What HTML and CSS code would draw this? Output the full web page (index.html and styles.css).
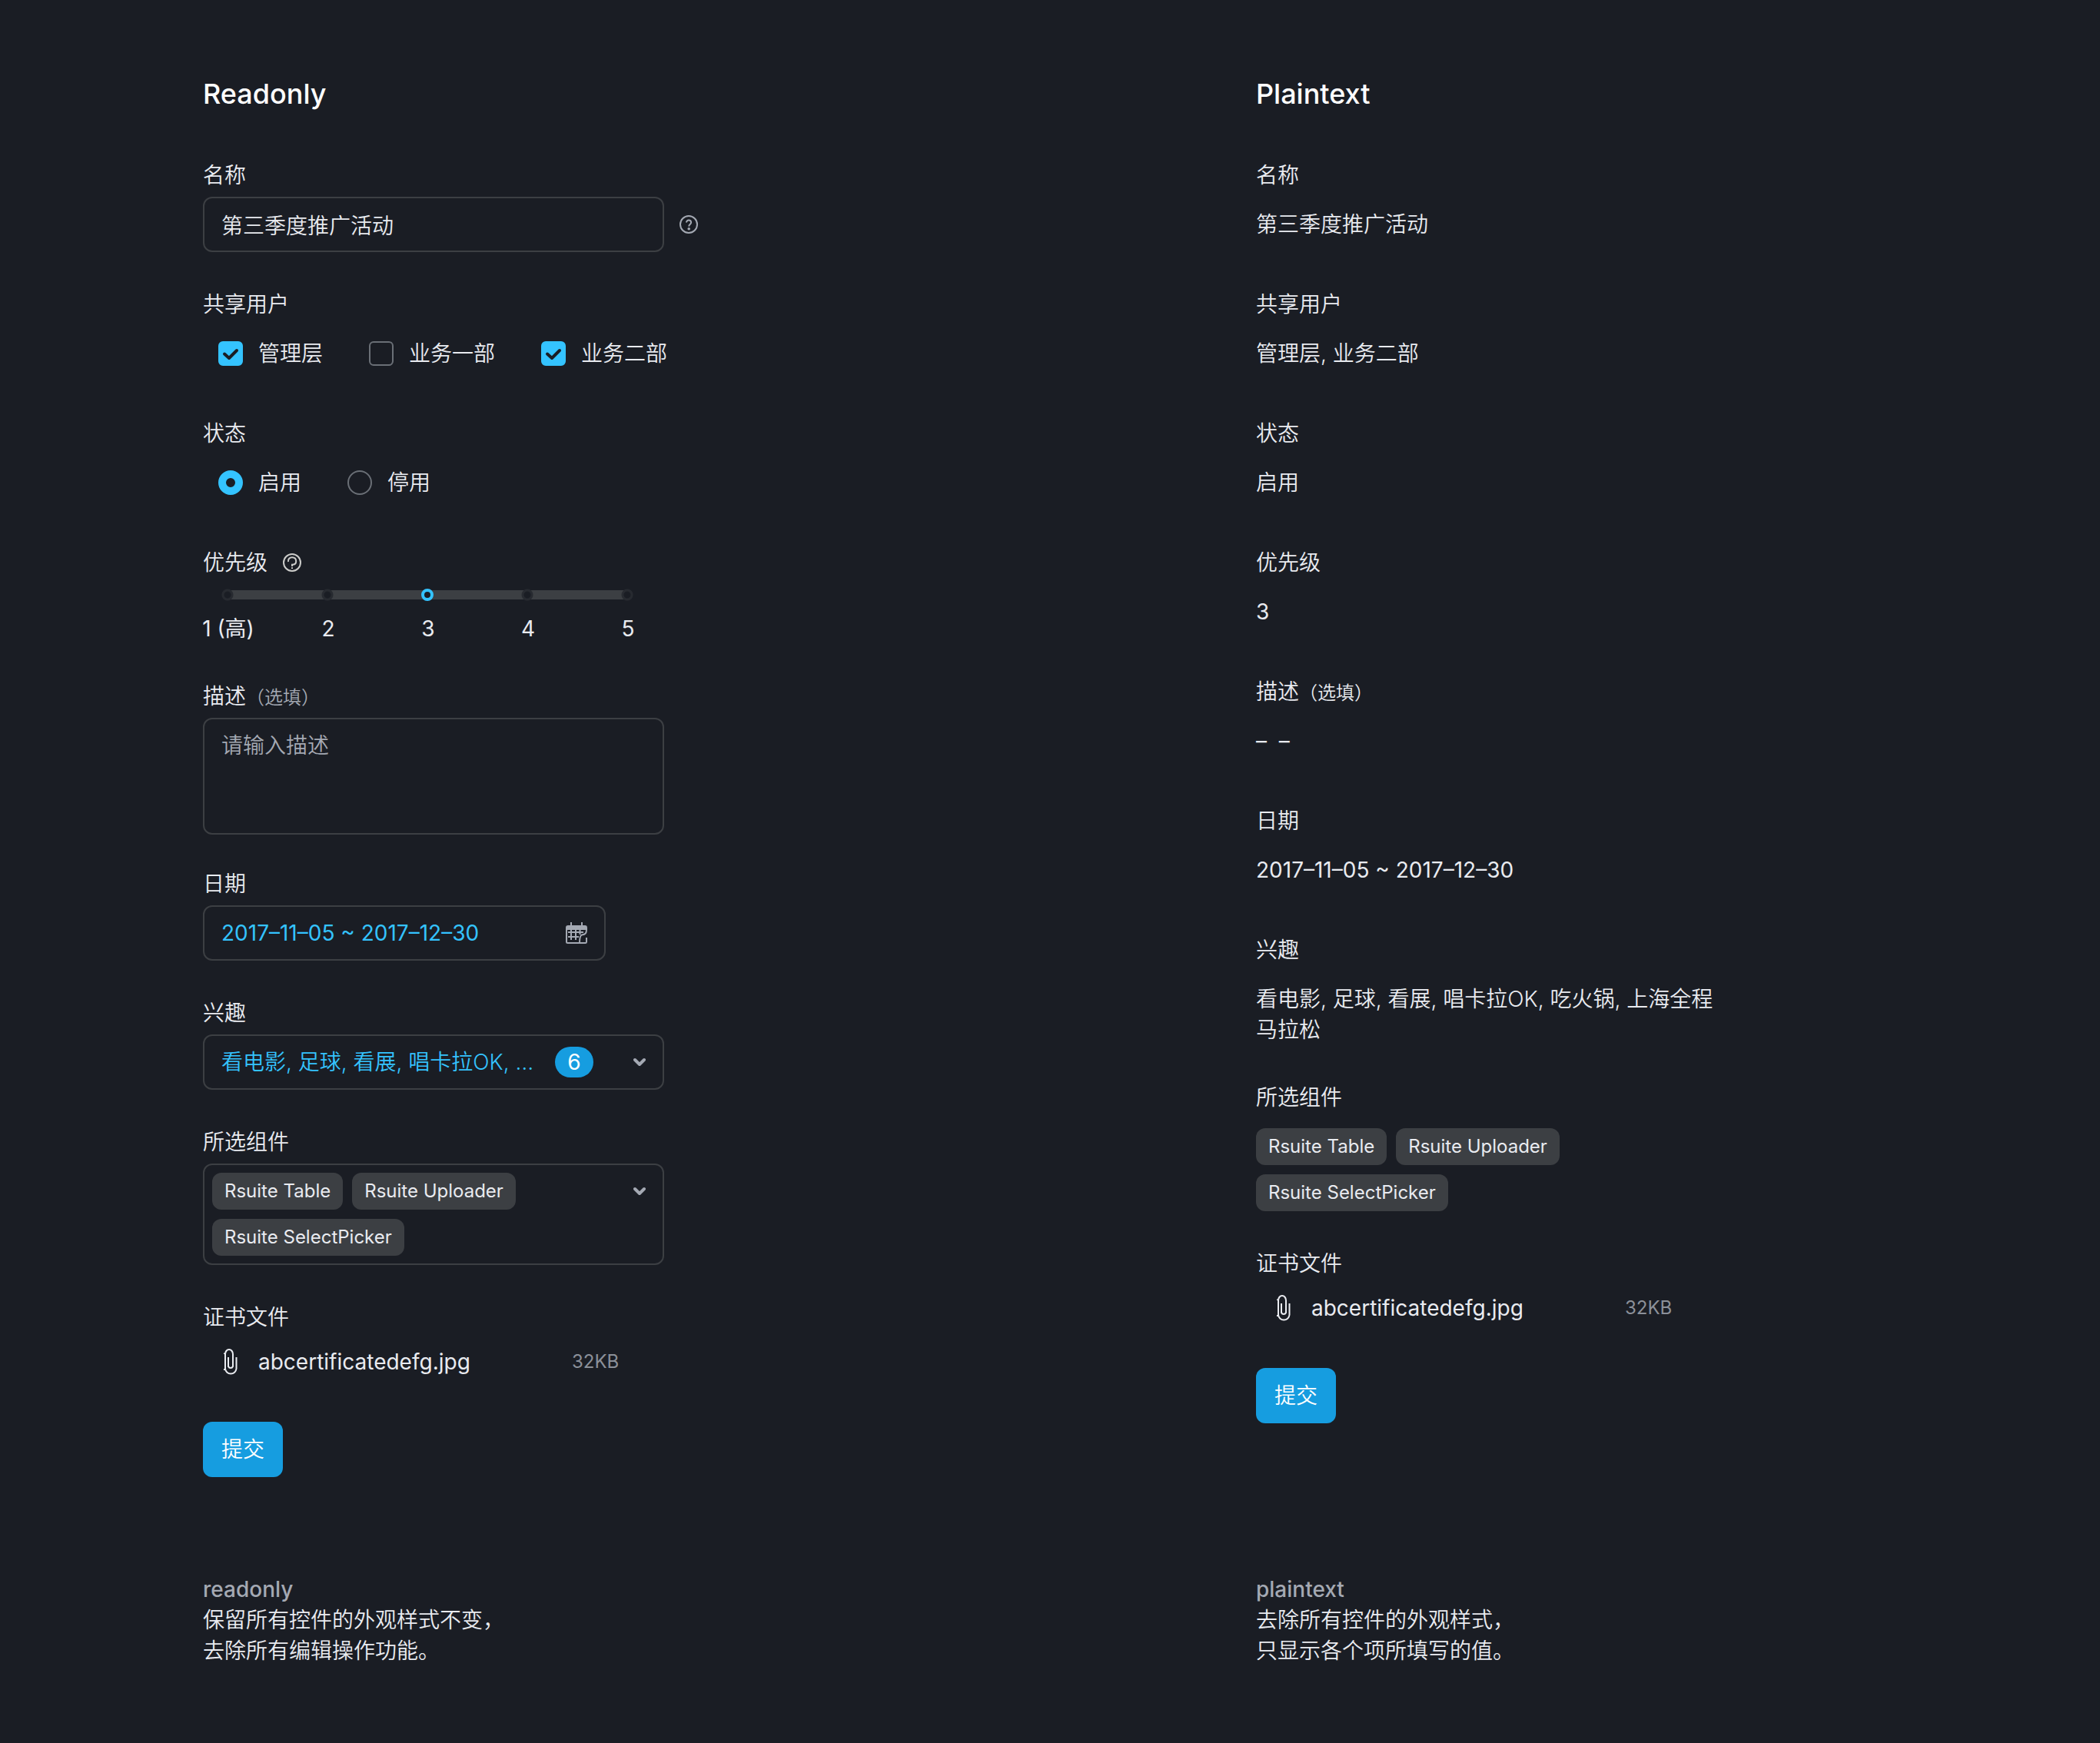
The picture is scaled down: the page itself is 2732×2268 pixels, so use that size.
FILE: index.html
```html
<!DOCTYPE html>
<html lang="zh-CN">
<head>
<meta charset="utf-8">
<meta name="viewport" content="width=device-width, initial-scale=1">
<title>Readonly / Plaintext</title>
<link rel="stylesheet" href="styles.css">
</head>
<body>
<main class="board">
  <form class="panel">
    <h2 class="panel-title">Readonly</h2>

    <div class="field">
      <label class="label" for="name">名称</label>
      <div class="control-row">
        <input class="control" id="name" type="text" value="第三季度推广活动" readonly>
        <svg class="icon-help" viewBox="0 0 24 24" fill="none" stroke="currentColor" stroke-width="2" aria-hidden="true">
          <circle cx="12" cy="12" r="11"/>
          <path d="M9 9.6C9 7.800 10.200 6.600 12 6.600S15.100 7.800 15.100 9.500C15.100 11.700 12.300 11.700 12.200 14.600"/>
          <circle cx="12.200" cy="17.800" r="1.800" fill="currentColor" stroke="none"/>
        </svg>
      </div>
    </div>

    <fieldset class="field">
      <legend class="label">共享用户</legend>
      <div class="choices">
        <label class="choice"><span class="mark"><input class="box" type="checkbox" checked><svg class="tick" viewBox="0 0 32 32" aria-hidden="true"><path d="M8 16.500L14 22L24 12"/></svg></span>管理层</label>
        <label class="choice"><span class="mark"><input class="box" type="checkbox"></span>业务一部</label>
        <label class="choice"><span class="mark"><input class="box" type="checkbox" checked><svg class="tick" viewBox="0 0 32 32" aria-hidden="true"><path d="M8 16.500L14 22L24 12"/></svg></span>业务二部</label>
      </div>
    </fieldset>

    <fieldset class="field">
      <legend class="label">状态</legend>
      <div class="choices">
        <label class="choice"><input class="dot" type="radio" name="status" checked>启用</label>
        <label class="choice"><input class="dot" type="radio" name="status">停用</label>
      </div>
    </fieldset>

    <div class="field">
      <div class="label-row">
        <label class="label" for="priority">优先级</label>
        <svg class="icon-help icon-help-light" viewBox="0 0 24 24" fill="none" stroke="currentColor" stroke-width="2" aria-hidden="true">
          <circle cx="12" cy="12" r="11"/>
          <path d="M7 11C6.500 7.500 8.800 5.200 12 5.200S17.200 7.300 17.200 10.200S15 14.700 12 14.700V17"/>
          <path d="M12 18.300V20"/>
        </svg>
      </div>
      <div class="scale">
        <input class="slider" id="priority" type="range" min="1" max="5" value="3">
        <ul class="ticks">
          <li>1 (高)</li><li>2</li><li>3</li><li>4</li><li>5</li>
        </ul>
      </div>
    </div>

    <div class="field field-area">
      <label class="label" for="desc">描述<span class="optional">（选填）</span></label>
      <textarea class="control control-area" id="desc" placeholder="请输入描述" readonly></textarea>
    </div>

    <div class="field">
      <label class="label" for="date">日期</label>
      <div class="date">
        <input class="date-input" id="date" type="text" value="2017–11–05 ~ 2017–12–30" readonly>
        <svg class="icon-calendar" viewBox="0 0 28 28" fill="none" stroke="currentColor" stroke-width="2" aria-hidden="true">
          <path d="M7 0V5M21 0V5"/>
          <path d="M3 5H25A2 2 0 0 1 27 7V9H1V7A2 2 0 0 1 3 5Z" fill="currentColor"/>
          <path d="M1 9V25.500A1.500 1.500 0 0 0 2.500 27H25.500A1.500 1.500 0 0 0 27 25.500V20"/>
          <path d="M27 9C27 14 26 16 21 16.500C19 17 18 20 18 27M3 13H23M3 19H17M7 10V23M13 10V23M18.500 10V16"/>
        </svg>
      </div>
    </div>

    <div class="field">
      <span class="label" id="interest-label">兴趣</span>
      <button class="control picker" type="button" aria-haspopup="listbox" aria-labelledby="interest-label">
        <span class="picker-value">看电影, 足球, 看展, 唱卡拉OK, …</span>
        <span class="badge">6</span>
        <svg class="caret" viewBox="0 0 16 12" aria-hidden="true"><path d="M2 3L8 9L14 3"/></svg>
      </button>
    </div>

    <div class="field">
      <span class="label" id="parts-label">所选组件</span>
      <button class="control picker-tags" type="button" aria-haspopup="listbox" aria-labelledby="parts-label">
        <span class="tags"><span class="tag">Rsuite Table</span><span class="tag">Rsuite Uploader</span><span class="tag">Rsuite SelectPicker</span></span>
        <svg class="caret" viewBox="0 0 16 12" aria-hidden="true"><path d="M2 3L8 9L14 3"/></svg>
      </button>
    </div>

    <div class="field">
      <span class="label">证书文件</span>
      <div class="file">
        <svg class="icon-clip" viewBox="0 0 20 36" aria-hidden="true"><path d="M7 12V24A3.300 3.300 0 0 0 13 24V8A5 6 0 0 0 3 8V27A7.300 7.500 0 0 0 17.500 27V12M2 8V6.500M2 27V29"/></svg>
        <span class="file-name">abcertificatedefg.jpg</span>
        <span class="file-size">32KB</span>
      </div>
    </div>

    <button class="submit" type="button">提交</button>
  </form>

  <form class="panel">
    <h2 class="panel-title">Plaintext</h2>
    <dl class="plain">
      <div class="field"><dt class="label">名称</dt><dd class="value">第三季度推广活动</dd></div>
      <div class="field"><dt class="label">共享用户</dt><dd class="value">管理层, 业务二部</dd></div>
      <div class="field"><dt class="label">状态</dt><dd class="value">启用</dd></div>
      <div class="field"><dt class="label">优先级</dt><dd class="value latin">3</dd></div>
      <div class="field"><dt class="label">描述<span class="optional optional-plain">（选填）</span></dt><dd class="value latin">–&nbsp; –</dd></div>
      <div class="field"><dt class="label">日期</dt><dd class="value latin">2017–11–05 ~ 2017–12–30</dd></div>
      <div class="field"><dt class="label">兴趣</dt><dd class="value">看电影, 足球, 看展, 唱卡拉OK, 吃火锅, 上海全程马拉松</dd></div>
      <div class="field"><dt class="label">所选组件</dt><dd class="value-tags"><div class="tags"><span class="tag">Rsuite Table</span><span class="tag">Rsuite Uploader</span><span class="tag">Rsuite SelectPicker</span></div></dd></div>
      <div class="field"><dt class="label">证书文件</dt><dd class="file">
        <svg class="icon-clip" viewBox="0 0 20 36" aria-hidden="true"><path d="M7 12V24A3.300 3.300 0 0 0 13 24V8A5 6 0 0 0 3 8V27A7.300 7.500 0 0 0 17.500 27V12M2 8V6.500M2 27V29"/></svg>
        <span class="file-name">abcertificatedefg.jpg</span>
        <span class="file-size">32KB</span>
      </dd></div>
    </dl>
    <button class="submit" type="button">提交</button>
  </form>

  <section class="note">
    <h3 class="note-title">readonly</h3>
    <p>保留所有控件的外观样式不变，<br>去除所有编辑操作功能。</p>
  </section>
  <section class="note">
    <h3 class="note-title">plaintext</h3>
    <p>去除所有控件的外观样式，<br>只显示各个项所填写的值。</p>
  </section>
</main>
</body>
</html>
```
FILE: styles.css
```css
:root {
  --bg: #1a1d24;
  --text: #e9ebf0;
  --muted: #a4a9b3;
  --line: #3c3f43;
  --outline: #6a6f76;
  --accent: #34c3ff;
  --primary: #169de0;
}

* {
  box-sizing: border-box;
}

body {
  margin: 0;
  background: var(--bg);
  color: var(--text);
  font: 350 28px/40px Inter, "Noto Sans CJK SC", sans-serif;
}

input,
textarea,
button {
  margin: 0;
  color: inherit;
  font: inherit;
}

h2, h3, p, ul, dl, dd {
  margin: 0;
  padding: 0;
}

.board {
  display: grid;
  grid-template-columns: 1fr 1fr;
  gap: 126px 536px;
  padding: 96px 264px 100px;
}

.panel-title {
  margin-bottom: 60px;
  color: #fff;
  font-size: 36px;
  font-weight: 500;
  line-height: 52px;
}

.field {
  display: flex;
  flex-direction: column;
  gap: 8px;
  max-width: 600px;
  min-width: 0;
  margin: 0 0 48px;
  padding: 0;
  border: 0;
}

.field-area {
  margin-bottom: 44px;
}

.label {
  display: block;
  padding: 0;
  line-height: 40px;
}

legend.label {
  margin-bottom: 8px;
}

.label-row {
  display: flex;
  align-items: center;
  gap: 20px;
}

.optional {
  color: var(--muted);
  font-size: 24px;
  line-height: 1;
}

.optional-plain {
  color: inherit;
}

/* Boxed controls */
.control {
  display: block;
  width: 100%;
  height: 72px;
  padding: 0 22px;
  border: 2px solid var(--line);
  border-radius: 12px;
  outline: 0;
  background: transparent;
}

.control-row {
  display: flex;
  align-items: center;
  gap: 20px;
}

.control-row .control {
  flex: none;
}

.control-area {
  height: 152px;
  padding: 14px 22px;
  resize: none;
}

.control-area::placeholder {
  color: var(--muted);
  opacity: 1;
}

.icon-help {
  flex: none;
  width: 24px;
  height: 24px;
  color: var(--muted);
}

.icon-help-light {
  color: #cbcbc9;
}

/* Check boxes and radios */
.choices {
  display: flex;
  align-items: center;
  gap: 60px;
  height: 72px;
  padding-left: 20px;
  white-space: nowrap;
}

.choice {
  display: flex;
  align-items: center;
  gap: 20px;
}

.mark {
  display: grid;
}

.box,
.dot {
  grid-area: 1 / 1;
  width: 32px;
  height: 32px;
  border: 2px solid var(--outline);
  border-radius: 6px;
  appearance: none;
}

.box:checked {
  border-color: var(--accent);
  background: var(--accent);
}

.dot {
  border-radius: 50%;
}

.dot:checked {
  border: 10px solid var(--accent);
}

.tick {
  grid-area: 1 / 1;
  width: 32px;
  height: 32px;
  fill: none;
  stroke: var(--bg);
  stroke-width: 4;
  stroke-linecap: round;
  stroke-linejoin: round;
  pointer-events: none;
}

/* Priority scale */
.scale {
  padding-top: 6px;
}

.slider {
  display: block;
  width: 536px;
  height: 16px;
  margin: 0 0 16px 24px;
  background: transparent;
  appearance: none;
}

.slider::-webkit-slider-runnable-track {
  height: 16px;
  background:
    radial-gradient(circle, var(--bg) 4px, #272a30 5px, #272a30 7px, transparent 8px) -57px 0 / 130px 16px repeat-x,
    linear-gradient(var(--line), var(--line)) 8px 2px / 520px 12px no-repeat;
}

.slider::-webkit-slider-thumb {
  width: 16px;
  height: 16px;
  border: 4px solid var(--accent);
  border-radius: 50%;
  background: var(--bg);
  appearance: none;
}

.ticks {
  display: grid;
  grid-template-columns: repeat(5, 130px);
  margin-left: -32px;
  list-style: none;
  text-align: center;
}

.ticks,
.latin,
.tag,
.badge,
.date-input,
.file {
  font-weight: 400;
}

/* Date */
.date {
  display: flex;
  align-items: center;
  width: 524px;
  height: 72px;
  padding: 0 22px;
  border: 2px solid var(--line);
  border-radius: 12px;
}

.date-input {
  flex: 1;
  min-width: 0;
  padding: 0;
  border: 0;
  outline: 0;
  background: transparent;
  color: var(--accent);
}

.icon-calendar {
  width: 28px;
  height: 28px;
  color: var(--muted);
}

/* Pickers */
.picker {
  display: flex;
  align-items: center;
  text-align: left;
}

.picker-value {
  width: 414px;
  color: var(--accent);
  white-space: nowrap;
}

.badge {
  width: 50px;
  margin-left: 20px;
  border-radius: 20px;
  background: var(--primary);
  color: #fff;
  text-align: center;
}

.caret {
  width: 16px;
  height: 12px;
  margin-left: auto;
  fill: none;
  stroke: var(--muted);
  stroke-width: 4;
  stroke-linecap: round;
  stroke-linejoin: round;
}

.picker-tags {
  display: flex;
  align-items: flex-start;
  height: auto;
  padding: 10px 22px 10px 10px;
}

.picker-tags .caret {
  flex: none;
  margin-top: 18px;
}

.tags {
  display: flex;
  flex-wrap: wrap;
  gap: 12px;
  max-width: 480px;
}

.tag {
  padding: 0 16px;
  border-radius: 12px;
  background: var(--line);
  font-size: 24px;
  line-height: 48px;
}

/* Attached file */
.file {
  display: flex;
  align-items: center;
  height: 60px;
  padding-left: 26px;
}

.icon-clip {
  width: 20px;
  height: 36px;
  margin-right: 26px;
  fill: none;
  stroke: var(--text);
  stroke-width: 2;
}

.file-name {
  width: 408px;
}

.file-size {
  color: #8b9099;
  font-size: 24px;
}

.submit {
  display: block;
  height: 72px;
  padding: 0 24px;
  border: 0;
  border-radius: 12px;
  background: var(--primary);
  color: #fff;
}

/* Plain text values */
.value {
  min-height: 72px;
  padding-top: 16px;
}

.value-tags {
  padding-top: 12px;
}

.note-title {
  color: var(--muted);
  font-size: 28px;
  font-weight: 500;
  line-height: 40px;
}
```
